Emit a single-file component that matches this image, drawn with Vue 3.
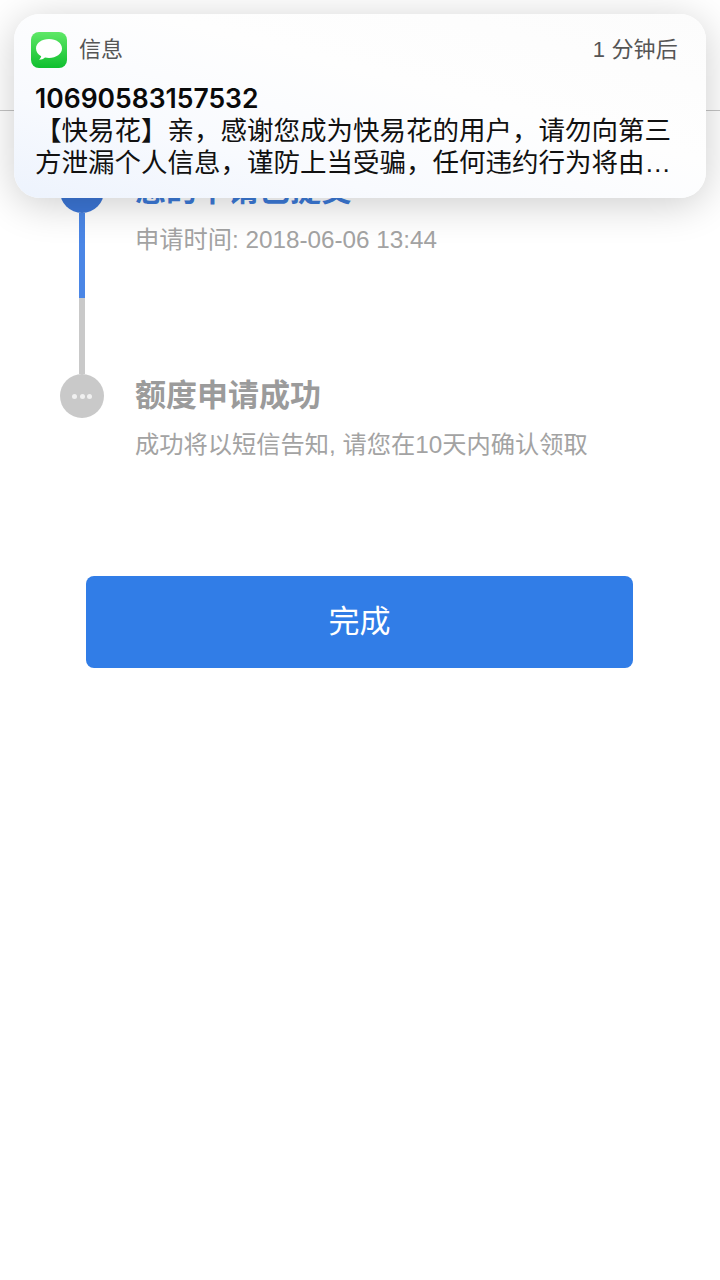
<script setup>
const steps = [
  { title: '您的申请已提交', sub: '申请时间: 2018-06-06 13:44', active: true },
  { title: '额度申请成功', sub: '成功将以短信告知, 请您在10天内确认领取', active: false }
]
</script>

<template>
  <div class="page">
    <header class="top"></header>
    <section class="timeline">
      <div v-for="(s, i) in steps" :key="s.title" class="step" :class="{ active: s.active }">
        <div class="rail">
          <div class="dot">
            <span class="pip"></span><span class="pip"></span><span class="pip"></span>
          </div>
          <div v-if="i < steps.length - 1" class="line">
            <div class="line-done"></div>
            <div class="line-todo"></div>
          </div>
        </div>
        <div class="copy">
          <div class="title">{{ s.title }}</div>
          <div class="sub">{{ s.sub }}</div>
        </div>
      </div>
    </section>
    <div class="action">
      <button class="done" type="button">完成</button>
    </div>

    <div class="notice">
      <div class="notice-head">
        <svg class="app" viewBox="0 0 36 36" width="36" height="36">
          <defs>
            <linearGradient id="msg" x1="0" y1="0" x2="0" y2="1">
              <stop offset="0" stop-color="#5fe867" />
              <stop offset="1" stop-color="#0fbf2f" />
            </linearGradient>
          </defs>
          <rect width="36" height="36" rx="8" fill="url(#msg)" />
          <path d="M18 7C10.800 7 5 11 5 16.500c0 3.200 2 6 5.200 7.700-.3 1.300-1 2.500-2.200 3.500 2.300-.1 4.400-.9 6-2.300 1.300.3 2.600.5 4 .5 7.200 0 13-4 13-9.400S25.200 7 18 7z" fill="#fff" />
        </svg>
        <span class="app-name">信息</span>
        <span class="when">1 分钟后</span>
      </div>
      <div class="sender">10690583157532</div>
      <div class="body">
        <div class="body-line">【快易花】亲，感谢您成为快易花的用户，请勿向第三</div>
        <div class="body-line">方泄漏个人信息，谨防上当受骗，任何违约行为将由…</div>
      </div>
    </div>
  </div>
</template>

<style scoped>
.page {
  position: relative;
  width: 720px;
  height: 1280px;
  background: #fff;
  overflow: hidden;
  font-family: "Liberation Sans", "Noto Sans CJK SC", sans-serif;
}
.top {
  height: 110px;
  border-bottom: 1px solid #c4c4c4;
}
.timeline {
  padding: 58px 0 0 60px;
}
.step {
  display: flex;
  gap: 31px;
}
.rail {
  width: 44px;
  display: flex;
  flex-direction: column;
  align-items: center;
}
.dot {
  width: 44px;
  height: 44px;
  flex: none;
  border-radius: 50%;
  background: #c9c9c9;
  display: flex;
  align-items: center;
  justify-content: center;
  gap: 2.500px;
}
.active .dot {
  background: #3c76d6;
}
.pip {
  width: 5px;
  height: 5px;
  border-radius: 50%;
  background: #f0f0f0;
}
.line {
  width: 6px;
  display: flex;
  flex-direction: column;
}
.line-done {
  height: 85px;
  background: #4a86e6;
}
.line-todo {
  height: 76px;
  background: #c9c9c9;
}
.copy {
  flex: 1;
}
.title {
  height: 44px;
  line-height: 44px;
  font-size: 31px;
  font-weight: 700;
  color: #9b9b9b;
}
.active .title {
  color: #3c7ad8;
}
.sub {
  margin-top: 11px;
  font-size: 24.250px;
  line-height: 32px;
  color: #a3a3a3;
}
.action {
  padding: 115px 87px 0 86px;
}
.done {
  display: block;
  width: 547px;
  height: 92px;
  border: 0;
  border-radius: 8px;
  background: #317de7;
  color: #fff;
  font-family: inherit;
  font-size: 31px;
  padding: 0 0 8px;
}
.notice {
  position: absolute;
  left: 14px;
  top: 14px;
  width: 692px;
  height: 184px;
  box-sizing: border-box;
  padding: 18px 21px 0 21px;
  border-radius: 26px;
  background: linear-gradient(to top right, #edf3fd 0%, #f8fafe 28%, #fefefe 60%, #fcfcfc 100%);
  box-shadow: 0 6px 40px rgba(0, 0, 0, 0.2);
}
.notice-head {
  display: flex;
  align-items: center;
  height: 36px;
  margin-left: -4px;
}
.app {
  flex: none;
}
.app-name {
  margin: 0 0 6px 12px;
  font-size: 22px;
  color: #555;
}
.when {
  margin: 0 7px 6px auto;
  font-size: 22px;
  color: #555;
  letter-spacing: 0.2px;
}
.sender {
  margin-top: 13px;
  font-family: Inter, "Liberation Sans", sans-serif;
  font-size: 26.500px;
  line-height: 34px;
  font-weight: 600;
  color: #0a0a0a;
}
.body {
  font-size: 26.500px;
  line-height: 32px;
  color: #111;
}
.body-line {
  white-space: nowrap;
}
</style>
